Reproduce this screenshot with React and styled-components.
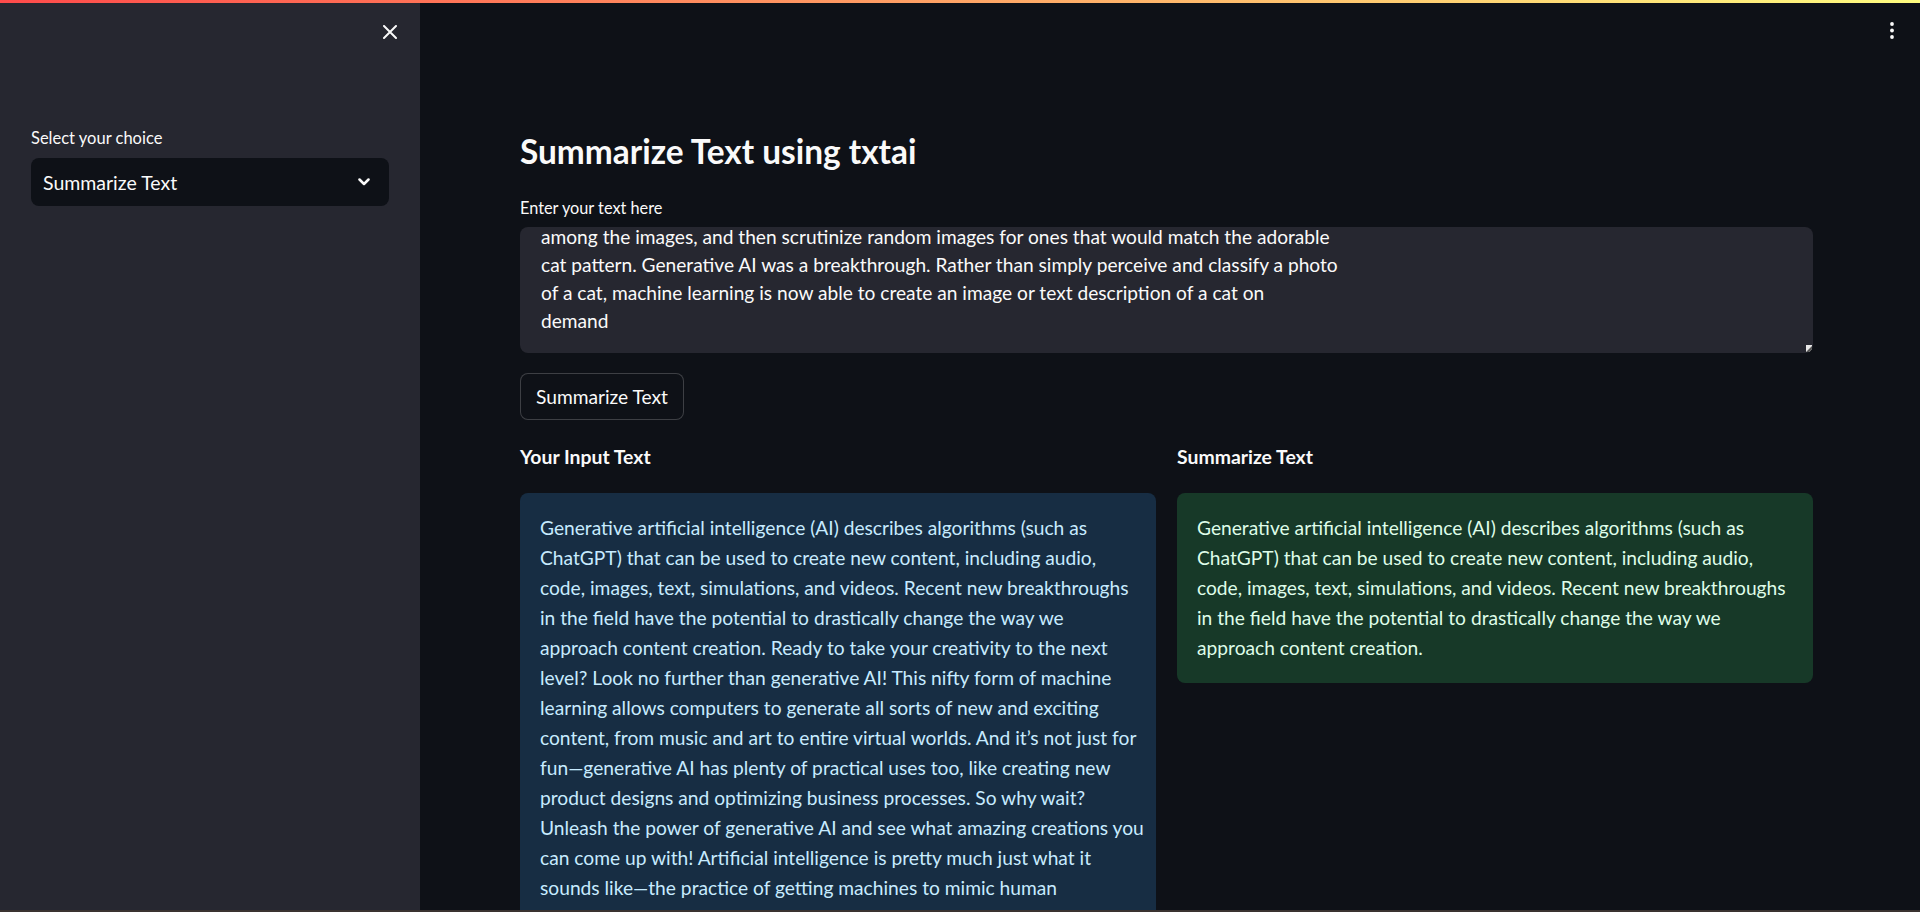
import React from "react";
import styled, { createGlobalStyle } from "styled-components";

const inputLines = [
  "Generative artificial intelligence (AI) describes algorithms (such as",
  "ChatGPT) that can be used to create new content, including audio,",
  "code, images, text, simulations, and videos. Recent new breakthroughs",
  "in the field have the potential to drastically change the way we",
  "approach content creation. Ready to take your creativity to the next",
  "level? Look no further than generative AI! This nifty form of machine",
  "learning allows computers to generate all sorts of new and exciting",
  "content, from music and art to entire virtual worlds. And it\u2019s not just for",
  "fun\u2014generative AI has plenty of practical uses too, like creating new",
  "product designs and optimizing business processes. So why wait?",
  "Unleash the power of generative AI and see what amazing creations you",
  "can come up with! Artificial intelligence is pretty much just what it",
  "sounds like\u2014the practice of getting machines to mimic human",
  "intelligence to perform tasks. You\u2019ve probably interacted with AI even if",
];

const summaryLines = [
  "Generative artificial intelligence (AI) describes algorithms (such as",
  "ChatGPT) that can be used to create new content, including audio,",
  "code, images, text, simulations, and videos. Recent new breakthroughs",
  "in the field have the potential to drastically change the way we",
  "approach content creation.",
];

const textareaLines = [
  "among the images, and then scrutinize random images for ones that would match the adorable",
  "cat pattern. Generative AI was a breakthrough. Rather than simply perceive and classify a photo",
  "of a cat, machine learning is now able to create an image or text description of a cat on",
  "demand",
];

function App() {
  return (
    <>
      <GlobalStyle />
      <Page>
        <Decoration />
        <Body>
          <Sidebar>
            <SidebarHeader>
              <IconButton aria-label="Close sidebar">
                <svg width="14" height="14" viewBox="0 0 14 14">
                  <path d="M1 1 13 13M13 1 1 13" stroke="#fafafa" strokeWidth="2" strokeLinecap="round" />
                </svg>
              </IconButton>
            </SidebarHeader>
            <SideLabel>Select your choice</SideLabel>
            <SelectBox>
              <span>Summarize Text</span>
              <svg width="12" height="8" viewBox="0 0 12 8">
                <path d="M1.5 1.5 6 6l4.5-4.5" fill="none" stroke="#fafafa" strokeWidth="2.5" strokeLinecap="round" strokeLinejoin="round" />
              </svg>
            </SelectBox>
          </Sidebar>

          <Main>
            <MainHeader>
              <svg width="4" height="17" viewBox="0 0 4 17">
                <circle cx="2" cy="2" r="1.9" fill="#fafafa" />
                <circle cx="2" cy="8.5" r="1.9" fill="#fafafa" />
                <circle cx="2" cy="15" r="1.9" fill="#fafafa" />
              </svg>
            </MainHeader>

            <Title>Summarize Text using txtai</Title>
            <FieldLabel>Enter your text here</FieldLabel>
            <TextBox>
              <TextBoxInner>
                {textareaLines.map((l, i) => (
                  <Line key={i}>{l}</Line>
                ))}
              </TextBoxInner>
              <Grip width="6" height="7" viewBox="0 0 6 7">
                <polygon points="0,0 6,0 6,7 0,7" fill="#e8e8e8" />
                <polygon points="6,1 6,7 0,7" fill="#555" />
              </Grip>
            </TextBox>
            <Button>Summarize Text</Button>

            <Columns>
              <Column>
                <Heading>Your Input Text</Heading>
                <Alert $kind="info">
                  {inputLines.map((l, i) => (
                    <Line key={i}>{l}</Line>
                  ))}
                </Alert>
              </Column>
              <Column>
                <Heading>Summarize Text</Heading>
                <Alert $kind="success">
                  {summaryLines.map((l, i) => (
                    <Line key={i}>{l}</Line>
                  ))}
                </Alert>
              </Column>
            </Columns>
          </Main>
        </Body>
        <BottomEdge />
      </Page>
    </>
  );
}

const GlobalStyle = createGlobalStyle`
  * { box-sizing: border-box; }
  html, body {
    margin: 0;
    padding: 0;
    height: 100%;
    background: #0e1117;
  }
  body {
    font-family: Lato, "Noto Sans", sans-serif;
    color: #fafafa;
    overflow: hidden;
  }
`;

const Page = styled.div`
  display: flex;
  flex-direction: column;
  height: 100vh;
`;

const Decoration = styled.div`
  height: 3px;
  flex: none;
  background: linear-gradient(90deg, rgb(255, 75, 75), rgb(255, 253, 128));
`;

const Body = styled.div`
  flex: 1;
  min-height: 0;
  display: flex;
`;

const BottomEdge = styled.div`
  height: 2px;
  flex: none;
  background: #3a3330;
`;

const Sidebar = styled.aside`
  width: 420px;
  flex: none;
  background: #262730;
  padding: 0 31px 0 31px;
`;

const SidebarHeader = styled.div`
  height: 58px;
  display: flex;
  justify-content: flex-end;
  align-items: center;
  margin-right: -8px;
`;

const IconButton = styled.div`
  width: 14px;
  height: 14px;
  display: flex;
  svg { display: block; }
`;

const SideLabel = styled.div`
  margin-top: 67px;
  font-size: 16.5px;
  line-height: 20px;
`;

const SelectBox = styled.div`
  margin-top: 10px;
  height: 48px;
  border-radius: 8px;
  background: #0e1117;
  display: flex;
  align-items: center;
  justify-content: space-between;
  padding: 0 19px 0 12px;
  font-size: 19.5px;
`;

const Main = styled.main`
  flex: 1;
  min-width: 0;
  overflow: hidden;
  padding: 0 107px 0 100px;
`;

const MainHeader = styled.div`
  height: 54px;
  margin: 0 -107px 0 -100px;
  padding-right: 26px;
  display: flex;
  justify-content: flex-end;
  align-items: center;
  svg { display: block; }
`;

const Title = styled.h1`
  margin: 74px 0 0;
  font-size: 33.4px;
  line-height: 40px;
  font-weight: 700;
`;

const FieldLabel = styled.div`
  margin-top: 26px;
  font-size: 16.3px;
  line-height: 22px;
`;

const TextBox = styled.div`
  position: relative;
  margin-top: 8px;
  height: 126px;
  background: #262730;
  border-radius: 8px;
  overflow: hidden;
  padding: 0 21px;
  font-size: 19.15px;
  line-height: 28px;
`;

const TextBoxInner = styled.div`
  margin-top: -4px;
`;

const Grip = styled.svg`
  position: absolute;
  right: 1px;
  bottom: 1px;
`;

const Line = styled.span`
  display: block;
  white-space: nowrap;
`;

const Button = styled.button`
  margin-top: 20px;
  height: 47px;
  padding: 0 15px;
  background: #0e1117;
  color: #fafafa;
  border: 1px solid rgba(250, 250, 250, 0.2);
  border-radius: 8px;
  font-family: inherit;
  font-size: 19.2px;
  display: block;
`;

const Columns = styled.div`
  margin-top: 24px;
  display: grid;
  grid-template-columns: minmax(0, 1fr) minmax(0, 1fr);
  column-gap: 21px;
  align-items: start;
`;

const Column = styled.div`
  min-width: 0;
`;

const Heading = styled.div`
  font-size: 19.4px;
  line-height: 26px;
  font-weight: 700;
`;

const Alert = styled.div`
  margin-top: 23px;
  border-radius: 8px;
  padding: 20px;
  font-size: 19.2px;
  line-height: 30px;
  background: ${(p) => (p.$kind === "success" ? "#173928" : "#172d43")};
  color: ${(p) => (p.$kind === "success" ? "#dffde9" : "#c7ebff")};
`;

export default App;
